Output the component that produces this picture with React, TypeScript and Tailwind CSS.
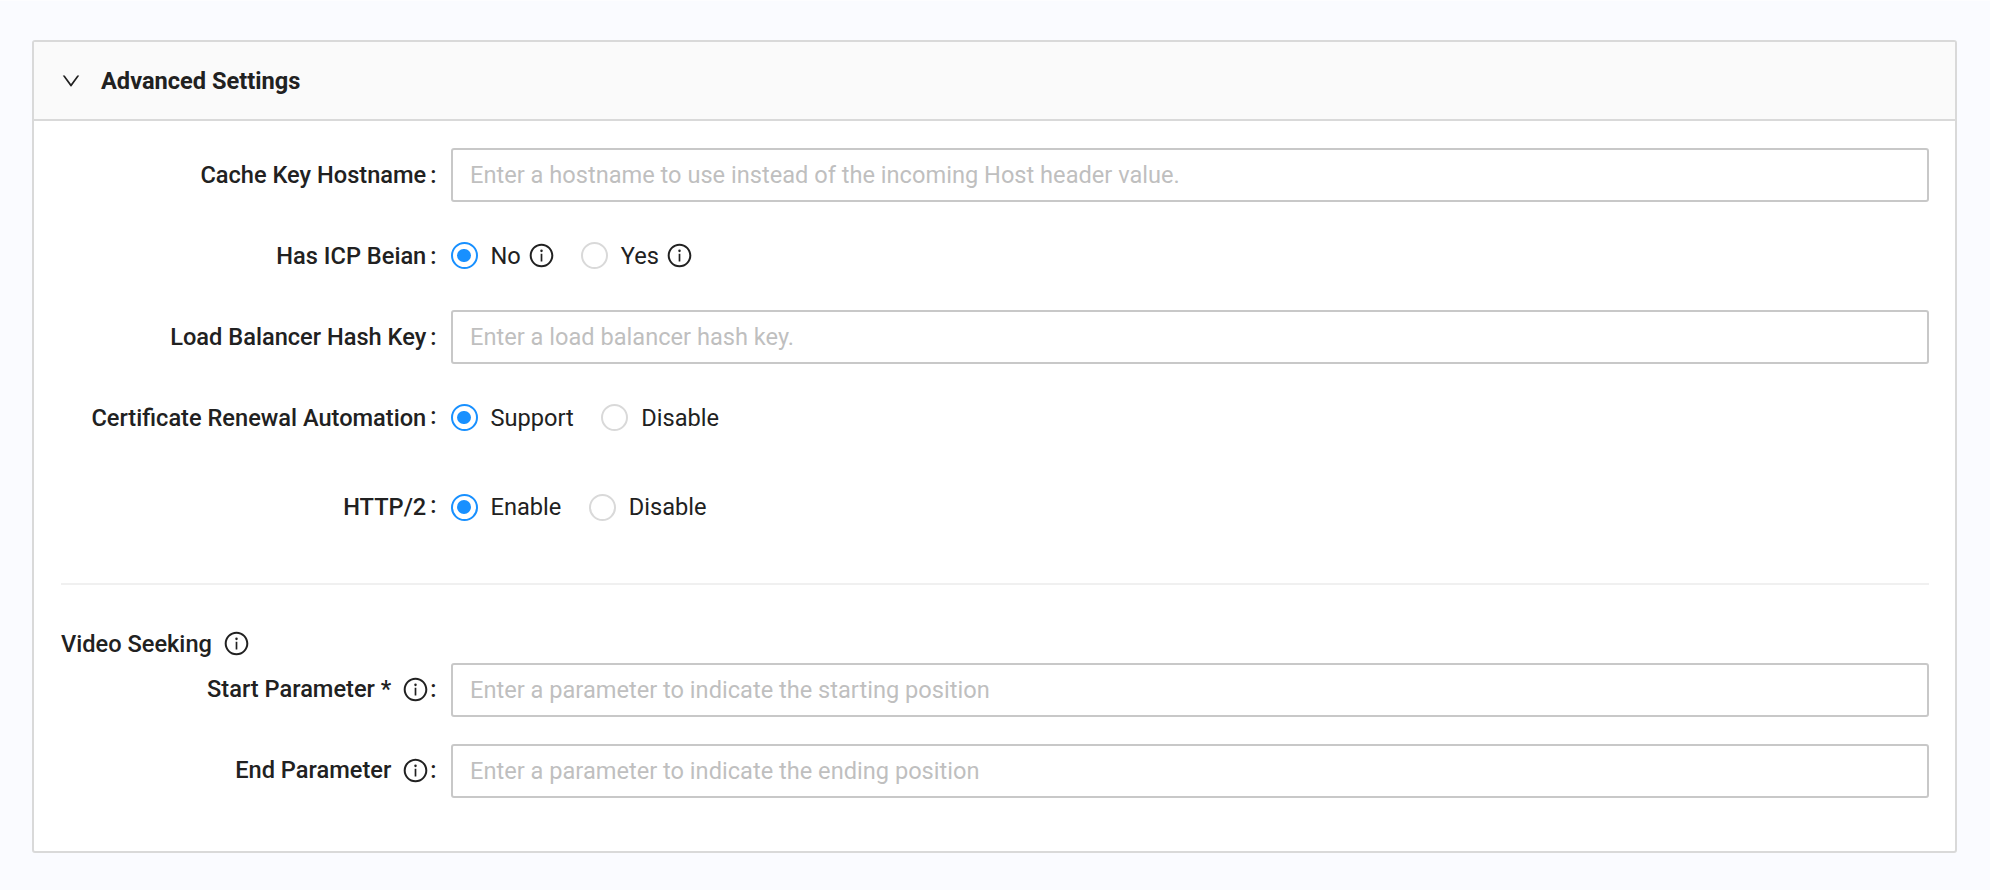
import type { ReactNode } from "react";

function InfoIcon({ className = "" }: { className?: string }) {
  return (
    <svg viewBox="0 0 1024 1024" fill="currentColor" className={`-mt-px size-[27px] shrink-0 ${className}`}>
      <path d="M512 64C264.6 64 64 264.6 64 512s200.6 448 448 448 448-200.6 448-448S759.4 64 512 64zm0 820c-205.4 0-372-166.6-372-372s166.6-372 372-372 372 166.6 372 372-166.6 372-372 372z" />
      <path d="M464 336a48 48 0 1 0 96 0 48 48 0 1 0-96 0zm72 112h-48c-4.4 0-8 3.6-8 8v272c0 4.4 3.6 8 8 8h48c4.4 0 8-3.6 8-8V456c0-4.4-3.6-8-8-8z" />
    </svg>
  );
}

interface RowProps {
  label: string;
  info?: boolean;
  raisedColon?: boolean;
  children: ReactNode;
  className?: string;
}

function Row({ label, info, raisedColon, children, className = "" }: RowProps) {
  return (
    <div className={`flex h-[54px] items-center ${className}`}>
      <div className="flex w-[389.5px] shrink-0 items-center justify-end pr-[14px] font-medium whitespace-nowrap">
        <span>{label}</span>
        {info && <InfoIcon className="ml-[10.5px]" />}
        <span className={`${info ? "ml-[1.5px]" : "ml-[4px]"} ${raisedColon ? "pb-[4px]" : ""}`}>:</span>
      </div>
      {children}
    </div>
  );
}

function Field({ placeholder }: { placeholder: string }) {
  return (
    <input
      placeholder={placeholder}
      className="h-[54px] min-w-0 flex-1 rounded-[3px] border-2 border-[#c8c8c8] bg-white px-[17.5px] placeholder:text-[#bfbfbf] placeholder:opacity-100 outline-none"
    />
  );
}

function Radio({ label, checked, info }: { label: string; checked?: boolean; info?: boolean }) {
  return (
    <label className={`flex items-center ${info ? "mr-[26px]" : "mr-[27.5px]"}`}>
      <span
        className={`-mt-px flex size-[27px] items-center justify-center rounded-full border-2 bg-white ${checked ? "border-[#1890ff]" : "border-[#d9d9d9]"}`}
      >
        {checked && <span className="size-[13.5px] rounded-full bg-[#1890ff]" />}
      </span>
      <span className="ml-[13px]">{label}</span>
      {info && <InfoIcon className="ml-[7px]" />}
    </label>
  );
}

export default function App() {
  return (
    <main className="h-[890px] border-t border-[#fdfdff] bg-[#fafbff] pt-[39px] pr-[33px] pl-[32px] font-['Roboto',sans-serif] text-[23.625px] leading-[37px] text-[#212121]">
      <section className="h-[813px] overflow-hidden rounded-[3px] border-2 border-[#d9d9d9] bg-white">
        <header className="flex h-[79px] items-center border-b-2 border-[#d9d9d9] bg-[#fafafa] pl-[26px]">
          <svg viewBox="0 0 1024 1024" fill="currentColor" className="size-[22px]">
            <path d="M884 256h-75c-5.1 0-9.9 2.5-12.9 6.6L512 654.2 227.9 262.6c-3-4.1-7.8-6.6-12.9-6.6h-75c-6.5 0-10.3 7.4-6.5 12.7l352.6 486.1c12.8 17.6 39 17.6 51.7 0l352.6-486.1c3.9-5.3.1-12.7-6.4-12.7z" />
          </svg>
          <h2 className="ml-[19px] pt-[2px] font-bold">Advanced Settings</h2>
        </header>
        <div className="pt-[27px] pr-[26px] pl-[27px]">
          <Row label="Cache Key Hostname">
            <Field placeholder="Enter a hostname to use instead of the incoming Host header value." />
          </Row>
          <Row label="Has ICP Beian" className="mt-[27px]">
            <Radio label="No" checked info />
            <Radio label="Yes" info />
          </Row>
          <Row label="Load Balancer Hash Key" className="mt-[27px]">
            <Field placeholder="Enter a load balancer hash key." />
          </Row>
          <Row label="Certificate Renewal Automation" raisedColon className="mt-[27px]">
            <Radio label="Support" checked />
            <Radio label="Disable" />
          </Row>
          <Row label="HTTP/2" raisedColon className="mt-[35.5px]">
            <Radio label="Enable" checked />
            <Radio label="Disable" />
          </Row>
          <hr className="mt-[48px] border-t-2 border-[#f0f0f0]" />
          <h3 className="mt-[41px] flex h-[37px] items-center font-medium">
            Video Seeking
            <InfoIcon className="ml-[11px]" />
          </h3>
          <Row label="Start Parameter *" info>
            <Field placeholder="Enter a parameter to indicate the starting position" />
          </Row>
          <Row label="End Parameter" info className="mt-[27px]">
            <Field placeholder="Enter a parameter to indicate the ending position" />
          </Row>
        </div>
      </section>
    </main>
  );
}
